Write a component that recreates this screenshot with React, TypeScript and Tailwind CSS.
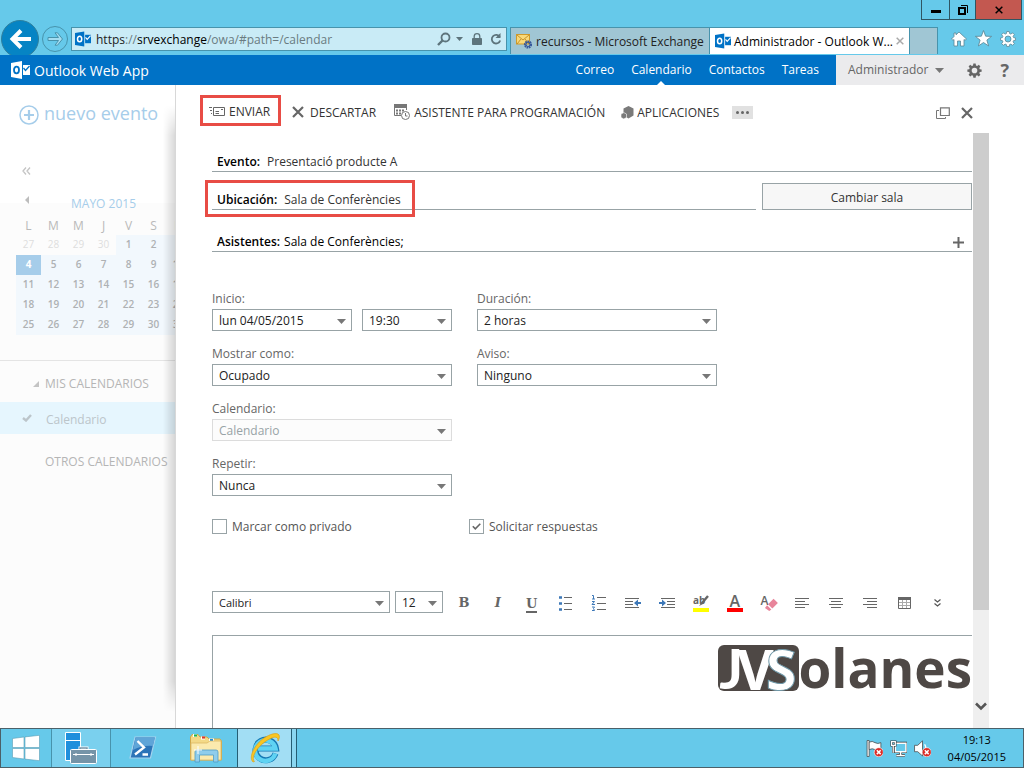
import { useState, type ReactNode } from 'react';
import clsx from 'clsx';

const weekDays = ['L', 'M', 'M', 'J', 'V', 'S', 'D'];
const weeks = [
  [27, 28, 29, 30, 1, 2, 3],
  [4, 5, 6, 7, 8, 9, 10],
  [11, 12, 13, 14, 15, 16, 17],
  [18, 19, 20, 21, 22, 23, 24],
  [25, 26, 27, 28, 29, 30, 31],
];

const OutlookIcon = ({ className, front, back }: { className: string; front: string; back: string }) => (
  <svg viewBox="0 0 19 18" className={className}>
    <path d="M0 2 L11 0 V18 L0 16 Z" fill={front} />
    <path d="M12 4 H19 V14 H12 Z" fill={front} />
    <path d="M12.5 7 L14.5 9.5 L18.5 5" stroke={back} strokeWidth="1.3" fill="none" />
    <ellipse cx="5.5" cy="9" rx="2.5" ry="3.3" stroke={back} strokeWidth="1.8" fill="none" />
  </svg>
);

const Gear = ({ className, fill, stroke }: { className: string; fill: string; stroke?: string }) => (
  <svg viewBox="0 0 16 16" className={className}>
    <path
      fillRule="evenodd"
      fill={fill}
      stroke={stroke}
      strokeWidth="0.8"
      d="M6.8 0.5h2.4l.4 2.1 1.2.5 1.8-1.2 1.7 1.7-1.2 1.8.5 1.2 2 .4v2.2l-2 .4-.5 1.2 1.2 1.8-1.7 1.7-1.8-1.2-1.2.5-.4 2H6.8l-.4-2-1.2-.5-1.8 1.2-1.7-1.7 1.2-1.8-.5-1.2-2-.4V7l2-.4.5-1.2-1.2-1.8 1.7-1.7 1.8 1.2 1.2-.5zM8 5a3 3 0 1 0 0 6 3 3 0 0 0 0-6z"
    />
  </svg>
);

const Caret = ({ className = 'fill-[#777]' }: { className?: string }) => (
  <svg viewBox="0 0 9 5" className={clsx('h-[5px] w-[9px] shrink-0', className)}>
    <path d="M0 0 H9 L4.5 5 Z" />
  </svg>
);

const Cross = ({ className }: { className: string }) => (
  <svg viewBox="0 0 12 12" className={className}>
    <path d="M1 1 L11 11 M11 1 L1 11" stroke="currentColor" strokeWidth="2.2" />
  </svg>
);

const BrowserBar = () => (
  <header className="shrink-0 bg-[#66c9ea] text-[12px]">
    <div className="flex h-5 justify-end pr-0.5">
      <button aria-label="Minimizar" className="flex w-[29px] items-center justify-center border border-t-0 border-[#2f5563]">
        <span className="mt-1 h-[3px] w-2.5 bg-black" />
      </button>
      <button aria-label="Restaurar" className="flex w-[25px] items-center justify-center border-b border-[#2f5563]">
        <svg viewBox="0 0 10 10" className="h-2.5 w-2.5" fill="none" stroke="#000">
          <path d="M3 0.5 H9.5 V8" />
          <path d="M1 3 H7 V9 H1 Z" strokeWidth="2" />
        </svg>
      </button>
      <button aria-label="Cerrar" className="flex w-[47px] items-center justify-center border border-t-0 border-[#2f5563] bg-[#c35850]">
        <Cross className="h-2 w-2" />
      </button>
    </div>

    <div className="flex h-[35px] overflow-hidden pl-px">
      <button aria-label="Atrás" className="flex h-[38px] w-[38px] shrink-0 items-center justify-center rounded-full border border-[#2f7f9d] bg-[#0684c4]">
        <svg viewBox="0 0 22 20" className="h-5 w-[22px]" fill="none" stroke="#fff" strokeWidth="4">
          <path d="M12 1.5 L3.5 10 L12 18.5 M3 10 H22" />
        </svg>
      </button>
      <button aria-label="Adelante" className="mt-1.5 ml-[3px] flex h-[26px] w-[26px] shrink-0 items-center justify-center rounded-full border border-[#4793ac]">
        <svg viewBox="0 0 16 14" className="h-3.5 w-4" fill="#a4ddf1" stroke="#4793ac">
          <path d="M8 0.8 H10.5 L15.5 7 L10.5 13.2 H8 L11.5 8.5 H1 V5.5 H11.5 Z" />
        </svg>
      </button>

      <div className="mt-[7px] ml-[3px] flex h-6 min-w-0 flex-1 items-center border border-[#4793ac] bg-[#c9ebf6] pr-1">
        <OutlookIcon className="ml-[3px] h-4 w-4 shrink-0" front="#0072c6" back="#fff" />
        <p className="mt-0.5 ml-[5px] flex-1 truncate text-[#6a7b81]">
          <span className="text-[#222]">https</span>://<span className="text-black">srvexchange</span>/owa/#path=/calendar
        </p>
        <svg viewBox="0 0 14 14" className="h-3.5 w-3.5" fill="none" stroke="#5d747c" strokeWidth="1.8">
          <circle cx="8.5" cy="5.5" r="4" />
          <path d="M5.5 8.5 L1 13" strokeWidth="2.4" />
        </svg>
        <Caret className="mx-[5px] h-1! w-[7px]! fill-[#5d747c]" />
        <svg viewBox="0 0 10 12" className="mx-1 h-3 w-2.5" fill="#5d747c">
          <rect y="5" width="10" height="7" rx="0.8" />
          <path d="M2.2 6 V3.5 a2.8 2.8 0 0 1 5.6 0 V6" fill="none" stroke="#5d747c" strokeWidth="1.3" />
        </svg>
        <svg viewBox="0 0 12 12" className="ml-1 h-3 w-3" fill="none" stroke="#5d747c" strokeWidth="1.8">
          <path d="M9.8 4 A4.3 4.3 0 1 0 10.2 7.5" />
          <path d="M10.5 0 V5 H5.5 Z" fill="#5d747c" stroke="none" />
        </svg>
      </div>

      <div className="mt-[7px] ml-[3px] flex h-[27px] w-[200px] shrink-0 items-center border border-b-0 border-[#4793ac] bg-[#a0c6d4] pl-[5px] text-[#222]">
        <svg viewBox="0 0 16 16" className="h-4 w-4 shrink-0">
          <rect x="0.5" y="1.5" width="13" height="9.5" fill="#f9d97a" stroke="#cf9a2a" />
          <path d="M1 2 L7 7 L13 2 M1 11 L5 6 M13 11 L9 6" fill="none" stroke="#b9821b" strokeWidth="0.8" />
          <circle cx="12" cy="11.5" r="3" fill="none" stroke="#35579b" strokeWidth="2.2" strokeDasharray="1.6 0.6" />
          <circle cx="12" cy="11.5" r="2" fill="none" stroke="#35579b" />
        </svg>
        <span className="mt-0.5 ml-1 truncate">recursos - Microsoft Exchange</span>
      </div>
      <div className="mt-[7px] flex h-[27px] w-[200px] shrink-0 items-center border border-b-0 border-l-0 border-[#4793ac] bg-white pr-[5px] pl-[5px] text-black">
        <OutlookIcon className="h-4 w-4 shrink-0" front="#0072c6" back="#fff" />
        <span className="mt-0.5 ml-[3px] flex-1 whitespace-nowrap">Administrador - Outlook W...</span>
        <button aria-label="Cerrar pestaña" className="text-[#a9a9a9]">
          <Cross className="h-2 w-2" />
        </button>
      </div>
      <div className="mt-[7px] h-[27px] w-7 shrink-0 border border-b-0 border-l-0 border-[#4793ac] bg-[#a0c6d4]" />

      <div className="flex h-[37px] w-[86px] shrink-0 items-center justify-end gap-2 pr-2">
        <svg viewBox="0 0 16 16" className="h-4 w-4" fill="#fff" stroke="#5b8796" strokeWidth="0.8">
          <path d="M8 1 L15.5 8 L14 9.3 L13 8.5 V15 H9.5 V10 H6.5 V15 H3 V8.5 L2 9.3 L0.5 8 L3 5.5 V2 H5 V3.8 Z" />
        </svg>
        <svg viewBox="0 0 16 16" className="h-[17px] w-[17px]" fill="#fff" stroke="#5b8796" strokeWidth="0.8">
          <path d="M8 0.5 L10 5.8 L15.6 6 L11.2 9.5 L12.8 15 L8 11.8 L3.2 15 L4.8 9.5 L0.4 6 L6 5.8 Z" />
        </svg>
        <Gear className="h-4 w-4" fill="#fff" stroke="#5b8796" />
      </div>
    </div>
  </header>
);

const NavBar = () => (
  <nav className="flex h-[30px] shrink-0 items-stretch bg-[#0072c6] text-[12px] text-white">
    <div className="flex flex-1 items-center pl-[11px]">
      <OutlookIcon className="h-[18px] w-[19px]" front="#fff" back="#0072c6" />
      <span className="ml-1 text-[14px]">Outlook Web App</span>
    </div>
    <div className="flex items-center gap-[17px] pr-[17px]">
      <a href="#correo">Correo</a>
      <a href="#calendario" className="relative flex h-full items-center">
        Calendario
        <svg viewBox="0 0 8 4" className="absolute bottom-0 left-1/2 h-1 w-2 -translate-x-1/2 fill-white">
          <path d="M0 4 L4 0 L8 4 Z" />
        </svg>
      </a>
      <a href="#contactos">Contactos</a>
      <a href="#tareas">Tareas</a>
    </div>
    <div className="flex w-[188px] items-center bg-[#ebebed] pl-3 text-[#666]">
      <button className="flex items-center gap-1.5">
        Administrador <Caret />
      </button>
      <button aria-label="Configuración" className="ml-auto">
        <Gear className="h-[15px] w-[15px]" fill="#666" />
      </button>
      <button aria-label="Ayuda" className="mr-[15px] ml-[18px] text-[18px] font-bold">
        ?
      </button>
    </div>
  </nav>
);

const Sidebar = () => (
  <aside className="relative w-44 shrink-0 overflow-hidden border-r border-[#d8d8d8] bg-[#fcfcfc]">
    <div className="h-[118px] bg-white pt-4 pl-[19px]">
      <button className="flex h-6 items-center gap-[5px] text-[18px] whitespace-nowrap text-[#a6cdea]">
        <svg viewBox="0 0 20 20" className="mt-1 h-5 w-5 shrink-0" fill="none" stroke="#a6cdea" strokeWidth="1.5">
          <circle cx="10" cy="10" r="9" />
          <path d="M10 5 V15 M5 10 H15" strokeWidth="2.2" />
        </svg>
        nuevo evento
      </button>
      <button aria-label="Contraer" className="mt-[42px] ml-[3px] block">
        <svg viewBox="0 0 9 8" className="h-2 w-[9px]" fill="none" stroke="#c4c4c4" strokeWidth="1.3">
          <path d="M4 0.5 L1 4 L4 7.5 M8 0.5 L5 4 L8 7.5" />
        </svg>
      </button>
      <div className="mt-[13px] flex h-6 items-start">
        <button aria-label="Mes anterior" className="mt-2 ml-1.5">
          <svg viewBox="0 0 4 8" className="h-2 w-1 fill-[#bdbdbd]">
            <path d="M4 0 V8 L0 4 Z" />
          </svg>
        </button>
      </div>
    </div>

    <table className="-mt-2 ml-4 w-[175px] table-fixed border-collapse text-center text-[10px]">
      <caption className="h-[21px] text-[12px] leading-[18px] text-[#a6cdea]">MAYO 2015</caption>
      <thead>
        <tr className="h-[19px] text-[12px] leading-[19px] text-[#b9b9b9]">
          {weekDays.map((day, i) => (
            <th key={i} className="p-0 font-normal">{day}</th>
          ))}
        </tr>
      </thead>
      <tbody>
        {weeks.map((week, row) => (
          <tr key={row} className="h-5 leading-[18px]">
            {week.map((day) => {
              const previous = row === 0 && day > 7;
              const today = row === 1 && day === 4;
              return (
                <td
                  key={day}
                  className={clsx('p-0 pb-0.5', {
                    'text-[#dedede]': previous,
                    'bg-[#a6cdea] font-bold text-white': today,
                    'bg-[#f2f8fd] font-semibold text-[#aeb1b3]': !previous && !today,
                  })}
                >
                  {day}
                </td>
              );
            })}
          </tr>
        ))}
      </tbody>
    </table>

    <div className="mt-[25px] border-t border-[#e4e4e4] pt-3.5 text-[12px] whitespace-nowrap text-[#b5b5b5]">
      <div className="flex h-[18px] items-center pl-[33px]">
        <svg viewBox="0 0 6 6" className="h-1.5 w-1.5 fill-[#c4c4c4]">
          <path d="M6 0 V6 H0 Z" />
        </svg>
        <span className="ml-1.5">MIS CALENDARIOS</span>
      </div>
      <div className="mt-[9px] flex h-8 items-center bg-[#e6f6fe] pl-[22px]">
        <svg viewBox="0 0 10 8" className="h-2 w-2.5" fill="none" stroke="#bcc5ca" strokeWidth="2.4">
          <path d="M1 4 L4 6.5 L9 1" />
        </svg>
        <span className="mt-1 ml-3.5 text-[#bcc5ca]">Calendario</span>
      </div>
      <div className="mt-[19px] pl-[45px] leading-[18px]">OTROS CALENDARIOS</div>
    </div>

    {/* shadow that the open form casts on the sidebar */}
    <div className="absolute top-5 right-0 bottom-4 w-3 bg-linear-to-r from-transparent to-black/15 mask-y-from-95%" />
  </aside>
);

const Toolbar = () => (
  <div className="flex h-12 shrink-0 items-start pt-2.5 pr-[51px] pl-6 text-[12px] whitespace-nowrap text-[#333]">
    <button className="flex h-[31px] w-[81px] items-center gap-1 border-3 border-[#e84c45] pl-1.5">
      <svg viewBox="0 0 16 10" className="h-2.5 w-4" fill="none" stroke="#666">
        <path d="M4.5 1.5 H15.5 V9.5 H4.5 Z M0 1.5 H3 M1 4.5 H3 M2 7.5 H3 M6.5 5.5 H10 M6.5 7.5 H10 M12 3.5 H14" />
      </svg>
      <span className="pt-0.5">ENVIAR</span>
    </button>
    <button className="ml-[11px] flex h-[34px] items-center gap-1.5">
      <Cross className="h-3 w-3 text-[#666]" />
      <span className="pt-0.5">DESCARTAR</span>
    </button>
    <button className="ml-[18px] flex h-[34px] items-center gap-1">
      <svg viewBox="0 0 16 16" className="h-4 w-4" fill="none" stroke="#777">
        <path d="M0.5 1 V11.5 H7 M12.5 1 V6" />
        <path d="M0 0 H13 V4 H0 Z" fill="#777" stroke="none" />
        <path d="M2 6.5 H11 M2 9.5 H7" strokeDasharray="2 1" strokeWidth="2" />
        <circle cx="11.5" cy="11.5" r="4" fill="#fff" />
        <path d="M11.5 9 V12 H13.5" />
      </svg>
      <span className="pt-0.5">ASISTENTE PARA PROGRAMACIÓN</span>
    </button>
    <button className="ml-4 flex h-[34px] items-center gap-[3px]">
      <svg viewBox="0 0 13 13" className="h-[13px] w-[13px]" fill="#7a7a7a">
        <path d="M7.5 0 L12.500 2.500 V9.500 L7.500 12.500 L2.500 9.500 V2.500 Z" />
        <path d="M2.800 6.600 L5.500 8 V11.500 L2.800 13 L0 11.500 V8 Z" stroke="#fff" strokeWidth="0.600" />
      </svg>
      <span className="pt-0.5">APLICACIONES</span>
    </button>
    <button aria-label="Más" className="mt-[11px] ml-[13px] flex h-[13px] w-[21px] items-center justify-center gap-0.5 bg-[#e1e1e1]">
      <span className="h-[3px] w-[3px] rounded-full bg-[#666]" />
      <span className="h-[3px] w-[3px] rounded-full bg-[#666]" />
      <span className="h-[3px] w-[3px] rounded-full bg-[#666]" />
    </button>
    <button aria-label="Abrir en otra ventana" className="ml-auto flex h-9 items-center">
      <svg viewBox="0 0 14 12" className="h-3 w-3.5" fill="none" stroke="#777">
        <path d="M4.5 0.8 H13.3 V8.5 H4.5 Z" strokeWidth="1.2" />
        <path d="M3 3.5 H0.5 V11.5 H9.5 V10" />
      </svg>
    </button>
    <button aria-label="Cerrar" className="ml-[11px] flex h-9 items-center text-[#666]">
      <Cross className="h-3 w-3" />
    </button>
  </div>
);

type SelectProps = { id: string; value: string; className: string; label?: string; disabled?: boolean };

const Select = ({ id, value, className, label, disabled }: SelectProps) => (
  <div className={clsx('grid h-[22px] items-center', className)}>
    <select
      id={id}
      aria-label={label}
      disabled={disabled}
      className={clsx(
        'col-start-1 row-start-1 h-full w-full appearance-none border pt-0.5 pl-1.5',
        disabled ? 'border-[#dcdcdc] bg-[#fcfcfc] text-[#98a3a6] opacity-100' : 'border-[#98a3a6] bg-white text-[#222]',
      )}
    >
      <option>{value}</option>
    </select>
    <Caret className="pointer-events-none col-start-1 row-start-1 mt-0.5 mr-1.5 justify-self-end fill-[#777]" />
  </div>
);

const Field = ({ id, label, children }: { id: string; label: string; children: ReactNode }) => (
  <div className="flex flex-col gap-0.5">
    <label htmlFor={id} className="h-4 leading-4 text-[#666]">{label}</label>
    {children}
  </div>
);

const Check = ({ label, initial }: { label: string; initial: boolean }) => {
  const [checked, setChecked] = useState(initial);
  return (
    <label className="flex h-[15px] items-center gap-[5px] text-[#555]">
      <span className="grid h-[15px] w-[15px] place-items-center">
        <input
          type="checkbox"
          checked={checked}
          onChange={() => setChecked(!checked)}
          className="col-start-1 row-start-1 h-[15px] w-[15px] appearance-none border border-[#98a3a6] bg-white"
        />
        {checked && (
          <svg viewBox="0 0 9 7" className="pointer-events-none col-start-1 row-start-1 h-[7px] w-[9px]" fill="none" stroke="#666" strokeWidth="1.6">
            <path d="M0.8 3.2 L3.3 5.8 L8.3 0.8" />
          </svg>
        )}
      </span>
      {label}
    </label>
  );
};

const Tool = ({ label, children }: { label: string; children: ReactNode }) => (
  <button aria-label={label} className="flex h-6 w-[18px] items-center justify-center text-[#666]">
    {children}
  </button>
);

const LineIcon = ({ d, children }: { d: string; children?: ReactNode }) => (
  <svg viewBox="0 0 16 16" className="h-4 w-4" fill="none" stroke="#666">
    <path d={d} />
    {children}
  </svg>
);

const EditorTools = () => (
  <div className="mt-[57px] flex h-[22px] gap-[5px]">
    <Select id="font" label="Fuente" value="Calibri" className="w-[178px] text-[11px]" />
    <Select id="size" label="Tamaño" value="12" className="w-12" />
    <div className="ml-[7px] flex flex-1 justify-between pr-[25px]">
      <Tool label="Negrita"><span className="font-['DejaVu_Serif'] text-[13px] font-bold">B</span></Tool>
      <Tool label="Cursiva"><span className="font-['DejaVu_Serif'] text-[13px] font-bold italic">I</span></Tool>
      <Tool label="Subrayado">
        <span className="mt-1 border-b-2 border-[#666] font-['DejaVu_Serif'] text-[13px] leading-[14px] font-bold">U</span>
      </Tool>
      <Tool label="Viñetas">
        <LineIcon d="M6 2.5 H14 M6 8.5 H14 M6 14.5 H14">
          <path d="M1 2.5 H4 M1 8.5 H4 M1 14.5 H4" stroke="#3d78b8" strokeWidth="2.6" />
        </LineIcon>
      </Tool>
      <Tool label="Numeración">
        <LineIcon d="M6 2.5 H15 M6 8.5 H15 M6 14.5 H15">
          <path d="M1 0.5 H2.5 V4 M1 4 H4 M1 6.5 H3.5 L1 9.5 H4 M1 12 H3.5 L2.5 13.5 L3.5 15.5 H1" stroke="#3d78b8" />
        </LineIcon>
      </Tool>
      <Tool label="Reducir sangría">
        <LineIcon d="M0 3.5 H14 M0 6.5 H8 M0 9.5 H8 M0 12.5 H14">
          <path d="M9 8 L13 4.5 V7 H16 V9 H13 V11.5 Z" fill="#3d78b8" stroke="none" />
        </LineIcon>
      </Tool>
      <Tool label="Aumentar sangría">
        <LineIcon d="M2 3.5 H16 M8 6.5 H16 M8 9.5 H16 M2 12.5 H16">
          <path d="M7 8 L3 4.5 V7 H0 V9 H3 V11.5 Z" fill="#3d78b8" stroke="none" />
        </LineIcon>
      </Tool>
      <Tool label="Resaltar">
        <span className="flex h-[17px] w-4 flex-col justify-between">
          <span className="flex items-start">
            <span className="text-[10px] leading-[10px] font-bold">ab</span>
            <svg viewBox="0 0 12 12" className="-ml-2 h-3 w-3 shrink-0">
              <path d="M11 1 L5 8" stroke="#666" strokeWidth="2.4" />
              <path d="M5 7 L6 9 L2 11 Z" fill="#666" />
            </svg>
          </span>
          <span className="h-1 bg-[#ff0]" />
        </span>
      </Tool>
      <Tool label="Color de fuente">
        <span className="flex h-[17px] w-4 flex-col items-center justify-between">
          <span className="text-[16px] leading-[12px] font-semibold">A</span>
          <span className="h-1 w-full bg-[#f00]" />
        </span>
      </Tool>
      <Tool label="Borrar formato">
        <span className="flex h-4 w-4 items-start">
          <span className="text-[12px] leading-[11px] font-semibold">A</span>
          <svg viewBox="0 0 12 13" className="-ml-1.5 h-4 w-[15px] shrink-0" fill="#e8849a">
            <path d="M8.5 3 L12 6.5 L7.5 11 L4 7.5 Z" />
            <path d="M3.2 8.3 L6.7 11.8 L5 13 L1.5 10.5 Z" />
          </svg>
        </span>
      </Tool>
      <Tool label="Alinear a la izquierda"><LineIcon d="M1 3.5 H15 M1 6.5 H11 M1 9.5 H15 M1 12.5 H11" /></Tool>
      <Tool label="Centrar"><LineIcon d="M1 3.5 H15 M3 6.5 H13 M1 9.5 H15 M3 12.5 H13" /></Tool>
      <Tool label="Alinear a la derecha"><LineIcon d="M1 3.5 H15 M5 6.5 H15 M1 9.5 H15 M5 12.5 H15" /></Tool>
      <Tool label="Tabla">
        <LineIcon d="M2.5 2.5 H14.5 V13.5 H2.5 Z">
          <path d="M2 2 H15 V5 H2 Z" fill="#666" stroke="none" />
          <path d="M6.5 5 V13 M10.5 5 V13 M3 7.5 H14 M3 10.5 H14" stroke="#aaa" />
        </LineIcon>
      </Tool>
      <Tool label="Más opciones">
        <svg viewBox="0 0 7 8" className="h-2 w-[7px]" fill="none" stroke="#555" strokeWidth="1.2">
          <path d="M0.5 0.5 L3.5 3 L6.5 0.5 M0.5 4.5 L3.5 7 L6.5 4.5" />
        </svg>
      </Tool>
    </div>
  </div>
);

const Watermark = () => (
  <div
    aria-label="JMSolanes"
    className="pointer-events-none absolute top-2.5 right-0 flex h-[46px] items-center text-[53px] leading-[46px] font-bold text-[#4e4845]"
  >
    <span className="flex h-[46px] w-[81px] items-center justify-end rounded-md bg-[#4e4845] pr-0.5 text-[56px] text-white">
      <span className="font-['Lato']">J</span>
      <span className="-ml-1.5">V</span>
      <span className="-ml-2 [-webkit-text-stroke:1px_#6f98a8]">S</span>
    </span>
    <span>olanes</span>
  </div>
);

const EventForm = () => {
  const [subject, setSubject] = useState('Presentació producte A');
  const [place, setPlace] = useState('Sala de Conferències');
  const [guests, setGuests] = useState('Sala de Conferències;');

  return (
    <div className="flex min-w-0 flex-1 flex-col pl-9 text-[12px]">
      <div className="mt-[19px] flex h-5 shrink-0 items-center border-b border-[#98a3a6] pl-[5px]">
        <label htmlFor="subject" className="font-semibold text-black">Evento:</label>
        <input id="subject" value={subject} onChange={(e) => setSubject(e.target.value)} className="ml-[7px] flex-1 text-[#333] outline-none" />
      </div>

      <div className="relative mt-[11px] flex h-[27px] shrink-0 items-end gap-1.5">
        <div className="flex h-5 flex-1 items-center border-b border-[#98a3a6] pl-[5px]">
          <label htmlFor="place" className="font-semibold text-black">Ubicación:</label>
          <input id="place" value={place} onChange={(e) => setPlace(e.target.value)} className="ml-[7px] flex-1 text-[#333] outline-none" />
        </div>
        <button className="h-full w-[210px] border border-[#98a3a6] bg-[#f7f7f7] pt-0.5 text-[#333]">Cambiar sala</button>
        <div className="pointer-events-none absolute -top-[3px] -left-[7px] h-[37px] w-[210px] border-3 border-[#e84c45]" />
      </div>

      <div className="mt-[22px] flex h-5 shrink-0 items-center border-b border-[#98a3a6] pr-2 pl-[5px]">
        <label htmlFor="guests" className="font-semibold text-black">Asistentes:</label>
        <input id="guests" value={guests} onChange={(e) => setGuests(e.target.value)} className="ml-1 flex-1 text-black outline-none" />
        <button aria-label="Agregar asistentes">
          <svg viewBox="0 0 11 11" className="mt-0.5 h-[11px] w-[11px]" stroke="#666" strokeWidth="2">
            <path d="M5.5 0 V11 M0 5.5 H11" />
          </svg>
        </button>
      </div>

      <div className="mt-[39px] grid shrink-0 grid-cols-[240px_240px] gap-x-[25px] gap-y-[15px]">
        <Field id="start" label="Inicio:">
          <div className="flex gap-2.5">
            <Select id="start" value="lun 04/05/2015" className="w-[140px]" />
            <Select id="time" label="Hora" value="19:30" className="w-[90px]" />
          </div>
        </Field>
        <Field id="duration" label="Duración:"><Select id="duration" value="2 horas" className="w-full" /></Field>
        <Field id="show" label="Mostrar como:"><Select id="show" value="Ocupado" className="w-full" /></Field>
        <Field id="reminder" label="Aviso:"><Select id="reminder" value="Ninguno" className="w-full" /></Field>
        <div className="col-span-2 w-[240px]">
          <Field id="calendar" label="Calendario:"><Select id="calendar" value="Calendario" className="w-full" disabled /></Field>
        </div>
        <div className="col-span-2 w-[240px]">
          <Field id="repeat" label="Repetir:"><Select id="repeat" value="Nunca" className="w-full" /></Field>
        </div>
      </div>

      <div className="mt-[23px] grid shrink-0 grid-cols-[257px_auto]">
        <Check label="Marcar como privado" initial={false} />
        <Check label="Solicitar respuestas" initial />
      </div>

      <EditorTools />

      <div className="relative mt-[22px] flex min-h-20 flex-1">
        <textarea aria-label="Mensaje" className="flex-1 resize-none border-t border-l border-[#98a3a6] bg-white outline-none" />
        <Watermark />
      </div>
    </div>
  );
};

const ServerIcon = () => (
  <svg viewBox="0 0 32 32" className="h-8 w-8">
    <path d="M0.5 0.5 H15.5 V28.5 H0.5 Z" fill="#1f8fdc" stroke="#fff" />
    <path d="M1 8.5 H15" stroke="#fff" />
    <path d="M15 18 V16 H22 V18" fill="none" stroke="#fff" strokeWidth="3" />
    <path d="M15 18 V16 H22 V18" fill="none" stroke="#7594a8" strokeWidth="1.5" />
    <rect x="5.5" y="17.5" width="26" height="14" rx="1" fill="#7594a8" stroke="#fff" />
    <path d="M8 22.5 H29 M11 21 V24 M26 21 V24" stroke="#fff" />
  </svg>
);

const PowerShellIcon = () => (
  <svg viewBox="0 0 28 24" className="h-6 w-7">
    <path d="M6 1 H26.5 L21.5 22 H1 Z" fill="#2b74b8" stroke="#a5d3ee" strokeWidth="1.2" />
    <path d="M6.5 1.6 H26 L24 10 Q14 9 4 14 Z" fill="#5fa5d8" />
    <path d="M8.5 5 L15 11.5 L6 18.5 M13.5 18.5 H19" fill="none" stroke="#fff" strokeWidth="2.4" />
  </svg>
);

const FolderIcon = () => (
  <svg viewBox="0 0 34 30" className="h-[30px] w-[34px]">
    <path d="M1.5 27 V4 L3 1.5 H9 L11 4 H18 L20 6 H31 L32.5 8 V27 Z" fill="#f3d987" stroke="#cfa84b" />
    <path d="M4 2.5 H8 M12 5 H16 M20 7 H25" stroke="#fff" strokeWidth="3" />
    <path d="M5 2.5 H8" stroke="#20b24a" strokeWidth="2.2" />
    <path d="M13 4.5 H16" stroke="#d83b2c" strokeWidth="2.2" />
    <path d="M21 7 H24" stroke="#1f8fdc" strokeWidth="2.2" />
    <path d="M2 10 H18 L21 8 H32 V27 H2 Z" fill="#fbeaae" stroke="#dcb964" strokeWidth="0.8" />
    <path d="M6 29 V19 Q6 17 8 17 H27 Q29 17 29 19 V29 H24.5 V22 H10.5 V29 Z" fill="#8fcdec" stroke="#4f9dc6" strokeWidth="0.8" />
    <path d="M9 13 V21 M5 17 H13" stroke="#fff" />
  </svg>
);

const ExplorerIcon = () => (
  <svg viewBox="0 0 32 32" className="h-8 w-8" fill="none">
    <path d="M26.5 21.5 A10.3 10.3 0 1 1 27 16.5 H9" stroke="#1679b4" strokeWidth="6" />
    <path d="M26.3 21.5 A10.3 10.3 0 1 1 26.5 16.5 H9" stroke="#5fd3f3" strokeWidth="4.4" />
    <path d="M4 30 C-1 25 6 12 15 6 C21 2 28 0 30 3 C31 5 30 7 29 9 C29 6 28 4.5 24 5.5 C17 8 8 15 5 23 C4 26 4 28 5.5 29.5 Z" fill="#f9c623" stroke="#d99a10" strokeWidth="0.6" />
  </svg>
);

const ErrorBadge = () => (
  <>
    <circle cx="12" cy="11.5" r="4.3" fill="#dc2c27" stroke="#fff" strokeWidth="0.6" />
    <path d="M10.2 9.7 L13.8 13.3 M13.8 9.7 L10.2 13.3" stroke="#fff" strokeWidth="1.4" />
  </>
);

const Taskbar = () => (
  <footer className="flex h-10 shrink-0 border border-[#4b6069] bg-[#66c9ea] text-[12px] text-black">
    <button aria-label="Inicio" className="flex w-[51px] items-center justify-center border-r border-[#4793ac]">
      <svg viewBox="0 0 28 26" className="h-[26px] w-7" fill="#fff" stroke="#5a9db5" strokeWidth="0.6">
        <path d="M0.5 3.5 L12 2 V12.5 H0.5 Z M13 1.9 L27.5 0.3 V12.5 H13 Z M0.5 13.5 H12 V24 L0.5 22.5 Z M13 13.5 H27.5 V25.7 L13 24.1 Z" />
      </svg>
    </button>
    <button aria-label="Administrador del servidor" className="flex w-[59px] items-center justify-center border-r border-[#4793ac] bg-[#7ad0ee]">
      <ServerIcon />
    </button>
    <button aria-label="PowerShell" className="flex w-[63px] items-center justify-center"><PowerShellIcon /></button>
    <button aria-label="Explorador de archivos" className="flex w-[63px] items-center justify-center"><FolderIcon /></button>
    <button aria-label="Internet Explorer" className="flex w-[55px] items-center justify-center border-x border-[#255e74] bg-[#a2def4]">
      <ExplorerIcon />
    </button>
    <span className="w-[5px] border-r border-[#255e74] bg-[#8bd7f1]" />

    <div className="ml-auto flex items-center gap-[7px] pr-[17px]">
      <svg viewBox="0 0 16 16" className="h-[17px] w-[17px]" fill="#fff" stroke="#444" strokeWidth="0.7">
        <path d="M1 0.5 H3 V15.5 H1 Z" />
        <path d="M3 2 Q6 0.5 8.5 2.5 Q11 4 14 2.5 V9 Q11 10.5 8.5 9 Q6 7.5 3 9 Z" />
        <ErrorBadge />
      </svg>
      <svg viewBox="0 0 16 16" className="h-[17px] w-[17px]" fill="none">
        <path d="M5 3 H15 V11 H5 Z M10 11 V14 M6 14.5 H14" stroke="#333" strokeWidth="2.6" />
        <path d="M5 3 H15 V11 H5 Z M10 11 V14 M6 14.5 H14" fill="#66c9ea" stroke="#fff" strokeWidth="1.4" />
        <path d="M1.5 1.5 H5 V5 H1.5 Z M3 5 V12" fill="#66c9ea" stroke="#333" strokeWidth="2.2" />
        <path d="M1.5 1.5 H5 V5 H1.5 Z M3 5 V12" stroke="#fff" strokeWidth="1.2" />
      </svg>
      <svg viewBox="0 0 16 16" className="h-[17px] w-[17px]" fill="#fff" stroke="#444" strokeWidth="0.7">
        <path d="M0.5 5 H3.5 L8 0.8 V15 L3.5 11 H0.5 Z" />
        <path d="M10 4 Q12 7 10.5 10" fill="none" stroke="#fff" strokeWidth="1.2" />
        <ErrorBadge />
      </svg>
      <div className="ml-2.5 text-center text-[11px] leading-[17px]">
        <div>19:13</div>
        <div>04/05/2015</div>
      </div>
    </div>
  </footer>
);

const App = () => (
  <div className="flex h-screen flex-col overflow-hidden bg-white font-['Open_Sans','Noto_Sans',sans-serif]">
    <BrowserBar />
    <NavBar />
    <div className="flex min-h-0 flex-1">
      <Sidebar />
      <main className="flex min-w-0 flex-1 flex-col">
        <Toolbar />
        <div className="flex min-h-0 flex-1 pr-[35px]">
          <EventForm />
          <div className="ml-px flex w-4 shrink-0 flex-col items-center justify-between bg-[#efefef] pb-[17px]">
            <div className="h-[477px] w-full bg-[#cdcdcd]" />
            <svg viewBox="0 0 12 9" className="h-[9px] w-3" fill="none" stroke="#555" strokeWidth="2.6">
              <path d="M1 1.5 L6 6.5 L11 1.5" />
            </svg>
          </div>
        </div>
      </main>
    </div>
    <Taskbar />
  </div>
);

export default App;
